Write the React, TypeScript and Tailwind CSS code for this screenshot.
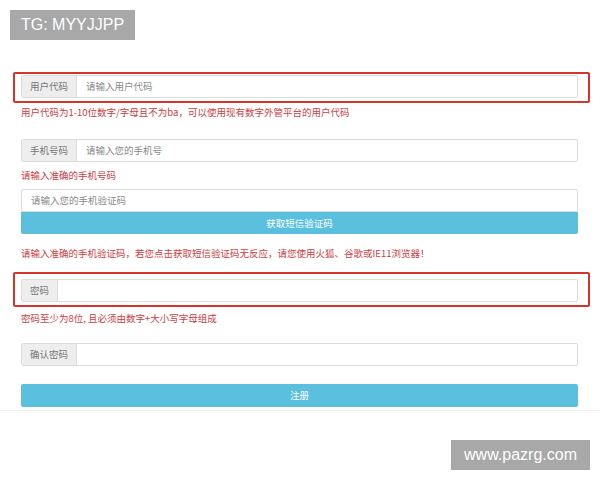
import type { ReactNode } from 'react'

const cjk = { fontFamily: '"Noto Sans CJK SC", "Noto Sans", sans-serif' }

function InputGroup({ label, placeholder }: { label?: string; placeholder: string }) {
  return (
    <div className="flex h-[23px] overflow-hidden rounded-[2px] border border-[#dcdcdc] bg-white text-[9.5px]">
      {label && (
        <div className="flex items-center border-r border-[#dcdcdc] bg-[#eeeeee] px-[8px] text-[#777]">{label}</div>
      )}
      <div className="flex items-center px-[9px] text-[#8a8a8a]">{placeholder}</div>
    </div>
  )
}

function Helper({ children, className = '' }: { children: ReactNode; className?: string }) {
  return <p className={`text-[9.5px] leading-[14px] text-[#cc3d42] ${className}`}>{children}</p>
}

function Marked({ children, className = '' }: { children: ReactNode; className?: string }) {
  return (
    <div className={`ml-[-8px] mr-[-12px] rounded-[2px] border-2 border-[#d6332b] pl-[6px] pr-[10px] pb-[3px] ${className}`}>
      {children}
    </div>
  )
}

export default function App() {
  return (
    <div className="relative h-[480px] w-[600px] overflow-hidden bg-white" style={cjk}>
      <div className="border-b border-[#f0f0f0] pl-[21px] pr-[22px] pt-[72px] pb-[3px]">
        <Marked className="pt-px">
          <InputGroup label="用户代码" placeholder="请输入用户代码" />
        </Marked>
        <Helper className="mt-[2px]">用户代码为1-10位数字/字母且不为ba，可以使用现有数字外管平台的用户代码</Helper>

        <div className="mt-[20px]">
          <InputGroup label="手机号码" placeholder="请输入您的手机号" />
        </div>
        <Helper className="mt-[6px]">请输入准确的手机号码</Helper>

        <div className="mt-[7px]">
          <InputGroup placeholder="请输入您的手机验证码" />
          <button className="flex h-[22px] w-full items-center justify-center rounded-b-[2px] bg-[#5bc0de] text-[9.5px] text-white">
            获取短信验证码
          </button>
        </div>
        <Helper className="mt-[12px]">请输入准确的手机验证码，若您点击获取短信验证码无反应，请您使用火狐、谷歌或IE11浏览器！</Helper>

        <Marked className="mt-[12px] pt-[5px]">
          <InputGroup label="密码" placeholder="" />
        </Marked>
        <Helper className="mt-[4px]">密码至少为8位, 且必须由数字+大小写字母组成</Helper>

        <div className="mt-[18px]">
          <InputGroup label="确认密码" placeholder="" />
        </div>

        <button className="mt-[18px] flex h-[23px] w-full items-center justify-center rounded-[2px] bg-[#5bc0de] text-[9.5px] text-white">
          注册
        </button>
      </div>

      <div
        className="absolute left-[10px] top-[10px] flex h-[30px] w-[125px] items-center justify-center bg-[#a8a8a8] text-[16px] text-white"
        style={{ fontFamily: '"Liberation Sans", Arial, sans-serif' }}
      >
        TG: MYYJJPP
      </div>
      <div
        className="absolute left-[451px] top-[440px] flex h-[30px] w-[139px] items-center justify-center bg-[#a8a8a8] text-[16px] text-white"
        style={{ fontFamily: '"Liberation Sans", Arial, sans-serif' }}
      >
        www.pazrg.com
      </div>
    </div>
  )
}
